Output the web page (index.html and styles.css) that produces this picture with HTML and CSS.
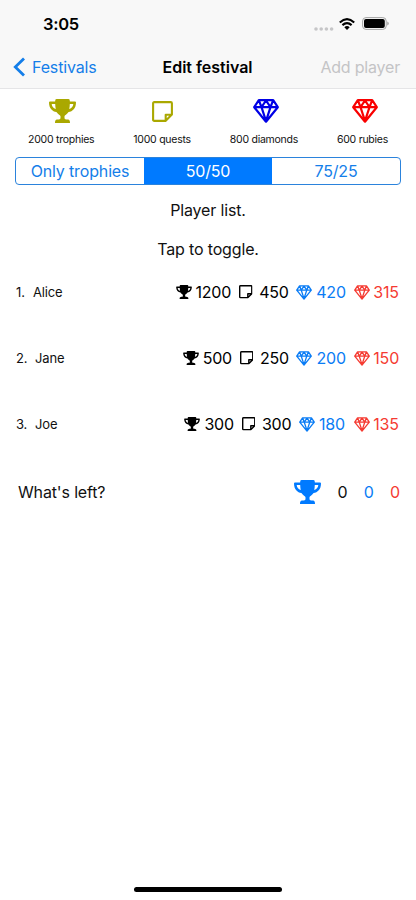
FILE: index.html
```html
<!DOCTYPE html>
<html lang="en">
<head>
<meta charset="utf-8">
<title>Edit festival</title>
<link rel="stylesheet" href="styles.css">
</head>
<body>
<svg class="symbols" aria-hidden="true">
  <symbol id="trophy" viewBox="0 0 27 24">
    <path fill="currentColor" fill-rule="evenodd" d="M7.5 0H19.5Q20.9 0 20.9 2.4H26Q27 2.4 27 3.4C27 9.3 23.5 12.4 19.6 13C18 15.4 15.5 16.4 15.5 17.2V19C15.5 20.2 16.5 20.4 19 20.6C20.5 20.7 21 21.7 21 24H6C6 21.7 6.5 20.7 8 20.6C10.5 20.4 11.5 20.2 11.5 19V17.2C11.5 16.4 9 15.4 7.4 13C3.5 12.4 0 9.3 0 3.4Q0 2.4 1 2.4H6.1Q6.1 0 7.5 0ZM2.7 5C2.9 7.4 4.2 9.2 6.8 10C6.4 8.6 6.3 7 6.2 5ZM24.3 5H20.8C20.7 7 20.6 8.6 20.2 10C22.8 9.2 24.1 7.4 24.3 5Z"/>
  </symbol>
  <symbol id="note" viewBox="0 0 21 21">
    <path fill="none" stroke="currentColor" stroke-linejoin="round" d="M2.2 1.1H18.7Q19.9 1.1 19.9 2.3V13.5L13.5 19.9H2.3Q1.1 19.9 1.1 18.7V2.3Q1.1 1.1 2.3 1.1ZM13.7 19.5V13.7H19.5"/>
  </symbol>
  <symbol id="gem" viewBox="0 0 26 24">
    <path fill="none" stroke="currentColor" stroke-linejoin="round" d="M5.8 1.2H20.2L24.8 8.2L13 22.7L1.2 8.2ZM1.2 8.2H24.8M5.8 1.2L8.5 8.2L13 1.5L17.5 8.2L20.2 1.2M8.5 8.2L13 22L17.5 8.2"/>
  </symbol>
</svg>
<header>
  <div class="status">
    <span class="time">3:05</span>
    <span class="signals">
      <svg width="20" height="4" viewBox="0 0 20 4" class="dots"><g fill="#c6c6c8"><circle cx="2" cy="2" r="1.8"/><circle cx="7.2" cy="2" r="1.8"/><circle cx="12.4" cy="2" r="1.8"/><circle cx="17.6" cy="2" r="1.8"/></g></svg>
      <svg width="16" height="12" viewBox="0 0 16 12" class="wifi"><g fill="none" stroke="#000" stroke-width="2.1"><path d="M.8 4.4Q8-2.2 15.2 4.4M3.4 7.1Q8 3 12.6 7.1"/></g><path d="M5.3 9.2Q8 7 10.7 9.2L8 11.9Z"/></svg>
      <svg width="27" height="13" viewBox="0 0 27 13"><rect x=".6" y=".6" width="23.6" height="11.8" rx="3.4" fill="none" stroke="#a3a3a3"/><rect x="2" y="2" width="20.8" height="9" rx="2"/><path fill="#999" d="M25.3 4.5Q26.7 5 26.7 6.5T25.3 8.5Z"/></svg>
    </span>
  </div>
  <nav>
    <a class="back"><svg width="13" height="20" viewBox="0 0 13 20"><path d="M11 1.5L2.3 10L11 18.5" fill="none" stroke="currentColor" stroke-width="2.8"/></svg><span>Festivals</span></a>
    <h1>Edit festival</h1>
    <span class="add">Add player</span>
  </nav>
</header>
<main>
  <section class="totals">
    <div class="total olive"><svg class="big-trophy"><use href="#trophy"/></svg><span>2000 trophies</span></div>
    <div class="total olive"><svg class="big-note"><use href="#note"/></svg><span>1000 quests</span></div>
    <div class="total blue"><svg class="big-gem"><use href="#gem"/></svg><span>800 diamonds</span></div>
    <div class="total red"><svg class="big-gem ruby"><use href="#gem"/></svg><span>600 rubies</span></div>
  </section>
  <div class="segments"><span>Only trophies</span><span class="active">50/50</span><span>75/25</span></div>
  <p class="hint">Player list.</p>
  <p class="hint">Tap to toggle.</p>
  <ul>
    <li><span class="num n1">1.</span><span class="name">Alice</span>
      <span class="stats"><svg class="trophy"><use href="#trophy"/></svg><b class="w1200">1200</b><svg class="note"><use href="#note"/></svg><b>450</b><svg class="gem sky"><use href="#gem"/></svg><b class="sky">420</b><svg class="gem coral"><use href="#gem"/></svg><b class="coral last">315</b></span></li>
    <li><span class="num">2.</span><span class="name">Jane</span>
      <span class="stats"><svg class="trophy"><use href="#trophy"/></svg><b>500</b><svg class="note"><use href="#note"/></svg><b>250</b><svg class="gem sky"><use href="#gem"/></svg><b class="sky">200</b><svg class="gem coral"><use href="#gem"/></svg><b class="coral last">150</b></span></li>
    <li><span class="num">3.</span><span class="name">Joe</span>
      <span class="stats"><svg class="trophy"><use href="#trophy"/></svg><b>300</b><svg class="note"><use href="#note"/></svg><b>300</b><svg class="gem sky"><use href="#gem"/></svg><b class="sky w180">180</b><svg class="gem coral"><use href="#gem"/></svg><b class="coral last">135</b></span></li>
  </ul>
  <div class="left-over"><span>What's left?</span><span class="remain"><svg class="big-trophy azure"><use href="#trophy"/></svg><b>0</b><b class="sky">0</b><b class="coral">0</b></span></div>
</main>
<footer><i></i></footer>
</body>
</html>
```
FILE: styles.css
```css
* { box-sizing: border-box; }
body { margin: 0; height: 900px; background: #fff; color: #111; font: 16px/20px Inter, "Liberation Sans", sans-serif; letter-spacing: -.15px; display: flex; flex-direction: column; overflow: hidden; }
.symbols { width: 0; height: 0; display: block; position: absolute; }
svg { display: block; flex: none; }
b { font-weight: 400; }
header { height: 89px; background: #f8f8f8; border-bottom: 1px solid #e5e5e7; }
.status { height: 46px; display: flex; justify-content: space-between; padding: 14px 27px 0 43px; }
.time { font-weight: 600; font-size: 16.5px; letter-spacing: -.3px; color: #000; }
.signals { display: flex; align-items: flex-start; padding-top: 3px; }
.dots { margin: 10px 5px 0 0; }
.wifi { margin: 1px 7px 0 0; }
nav { height: 42px; display: grid; grid-template-columns: 1fr auto 1fr; align-items: center; padding: 0 16px 0 13px; }
.back { display: flex; align-items: center; gap: 6px; color: #147ee9; letter-spacing: -.15px; }
h1 { margin: 0 0 0 2px; font-size: 16px; font-weight: 600; letter-spacing: 0; color: #000; }
.add { color: #c4c4c6; justify-self: end; letter-spacing: -.2px; }
main { flex: 1; }
.totals { height: 68px; display: flex; justify-content: space-between; padding: 10px 28px 0; }
.total { display: flex; flex-direction: column; align-items: center; justify-content: space-between; height: 48px; }
.total span { color: #111; font-size: 10.5px; line-height: 14px; white-space: nowrap; letter-spacing: -.25px; }
.olive { color: #aaa800; }
.blue { color: #0000e6; }
.red { color: #f90000; }
.azure { color: #007aff; }
.big-trophy { width: 27px; height: 24px; }
.total .big-trophy { margin-left: 2px; }
.big-note { width: 21px; height: 21px; margin-top: 2px; stroke-width: 2.1; }
.big-gem { width: 26px; height: 24px; margin-left: 4px; stroke-width: 2.2; }
.ruby { margin-left: 5px; }
.segments { height: 28px; margin: 0 15px; border: 1px solid #2b83dc; border-radius: 4px; display: grid; grid-template-columns: 1fr 1fr 1fr; overflow: hidden; text-align: center; line-height: 27px; color: #147ee9; }
.segments .active { background: #007aff; color: #fff; }
.hint { margin: 15px 0 19px; text-align: center; }
.hint + .hint { margin: 0; }
ul { list-style: none; margin: 0; padding: 0; }
li { height: 66px; display: flex; align-items: center; padding: 0 16px; font-size: 13px; }
.num { width: 19px; }
.n1 { width: 17px; }
.stats { margin-left: auto; display: flex; align-items: center; font-size: 16px; letter-spacing: -.2px; color: #000; }
.stats b { margin: 0 8px 0 4px; }
.stats .last { margin: 0 0 0 3.5px; width: 26.7px; white-space: nowrap; }
.stats .note + b { margin: 0 7.5px 0 6.5px; }
.stats .w180 { margin-right: 9px; }
.stats .w1200 { margin-left: 3.5px; }
.trophy { width: 16px; height: 14px; }
.note { width: 13.5px; height: 13.5px; stroke-width: 2.2; }
.gem { width: 16px; height: 15px; stroke-width: 2.2; }
.sky { color: #0a7cf5; }
.coral { color: #f53b32; }
.left-over { height: 70px; display: flex; align-items: center; justify-content: space-between; padding: 0 16px 0 18px; }
.remain { display: flex; align-items: center; }
.remain b { margin-left: 16.3px; }
footer { height: 13px; display: flex; justify-content: center; }
footer i { width: 148px; height: 5px; border-radius: 3px; background: #000; }
```
